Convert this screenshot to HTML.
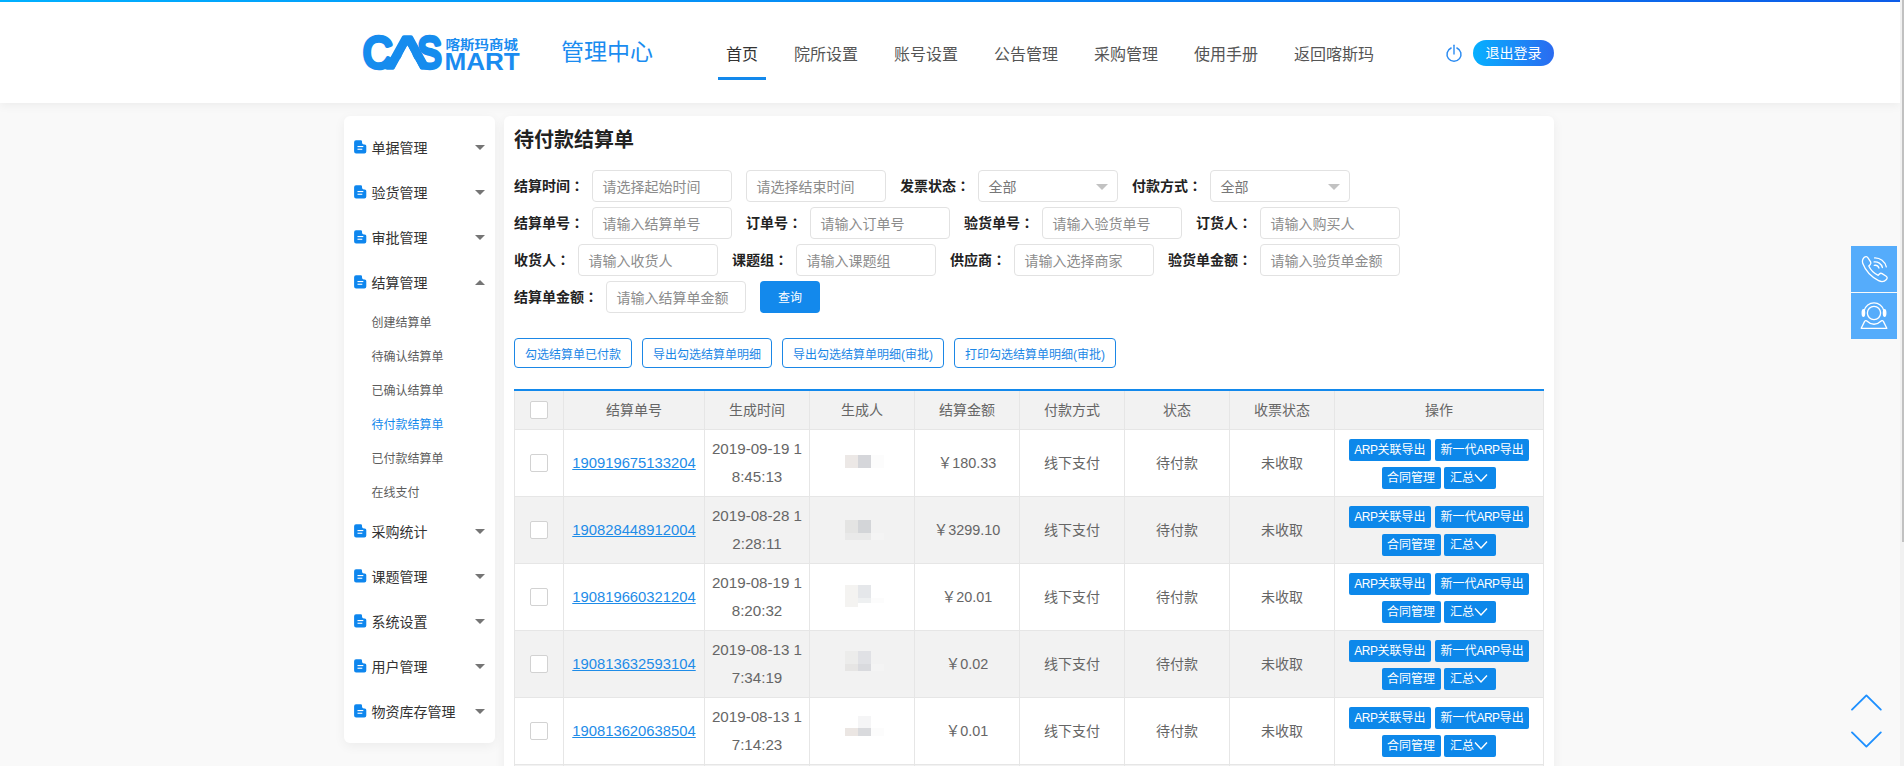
<!DOCTYPE html>
<html lang="zh-CN">
<head>
<meta charset="utf-8">
<title>待付款结算单 - 管理中心</title>
<style>
*{box-sizing:border-box;margin:0;padding:0}
html,body{width:1904px;height:766px;overflow:hidden}
body{position:relative;background:#f9f9f9;font-family:"Liberation Sans","Noto Sans CJK SC",sans-serif;font-size:14px;color:#333}
a{text-decoration:none;color:inherit}
ul{list-style:none}
/* fake scrollbar */
.sb-track{position:absolute;left:1900px;top:0;width:4px;height:766px;background:#f1f1f1;z-index:50}
.sb-thumb{position:absolute;left:1902px;top:0;width:2px;height:541.5px;background:#c1c1c1;z-index:51}
.page{position:absolute;left:0;top:0;width:1900px;height:766px;overflow:hidden}
/* header */
.header{position:absolute;left:0;top:0;width:1900px;height:103px;background:#fff;box-shadow:0 2px 10px rgba(0,0,0,.06);z-index:5}
.topline{position:absolute;left:0;top:0;width:1900px;height:2px;background:linear-gradient(90deg,#00b0ff,#0d5ce8)}
.hwrap{position:absolute;left:344px;top:0;width:1210px;height:103px}
.logo{position:absolute;left:19px;top:35px;width:160px;height:40px;overflow:visible}
.center-title{position:absolute;left:217px;top:36px;font-size:23px;line-height:32px;color:#1a8cf0;letter-spacing:0}
.nav{position:absolute;left:374px;top:0;height:103px;display:flex}
.nav a{display:block;margin-right:20px;padding:0 8px;height:80px;line-height:109px;font-size:16px;color:#555;border-bottom:3px solid transparent;white-space:nowrap}
.nav a.on{color:#333;border-bottom-color:#1389ec}
.power{position:absolute;left:1099.5px;top:44px;width:20px;height:20px}
.logout{position:absolute;left:1129px;top:40px;width:81px;height:26px;border-radius:13px;background:linear-gradient(90deg,#06b0ff,#2b6bf0);color:#fff;font-size:14px;line-height:26px;text-align:center}
/* sidebar */
.side{position:absolute;left:344px;top:116px;width:151px;height:627px;background:#fff;border-radius:6px;box-shadow:0 3px 12px rgba(0,0,0,.055)}
.mi{position:absolute;left:0;width:151px;height:45px;line-height:45px;font-size:14px;color:#333}
.mi svg.ic{position:absolute;left:9.5px;top:14px;width:13px;height:14px}
.mi span{position:absolute;left:27.5px;top:0}
.mi i{position:absolute;left:131px;top:19px;width:0;height:0;border-left:5px solid transparent;border-right:5px solid transparent;border-top:5px solid #757575}
.mi i.up{border-top:none;border-bottom:5px solid #757575}
.si{position:absolute;left:27.5px;height:34px;line-height:34px;font-size:12px;color:#5c5c5c;white-space:nowrap}
.si.on{color:#1389ec}
/* main */
.main{position:absolute;left:504px;top:116px;width:1050px;height:700px;background:#fff;border-radius:6px;box-shadow:0 3px 12px rgba(0,0,0,.055)}
.main h2{position:absolute;left:10px;top:9px;font-size:20px;line-height:30px;font-weight:bold;color:#222}
.frow{position:absolute;left:10px;height:32px;display:flex;align-items:center;white-space:nowrap}
.frow label em{font-style:normal;font-family:"Liberation Sans","Noto Sans CJK JP",sans-serif}
.frow label{font-weight:bold;font-size:14px;color:#222;margin-right:8px;line-height:32px}
.inp{width:140px;height:32px;border:1px solid #e2e2e2;border-radius:4px;background:#fff;padding:0 10px 0 9.5px;font-size:14px;line-height:32.5px;color:#8c8c8c;overflow:hidden;margin-right:14px;position:relative}
.inp.sel:after{content:"";position:absolute;right:9px;top:13px;border-left:6px solid transparent;border-right:6px solid transparent;border-top:6px solid #c2c2c2}
.inp.sel{color:#777}
.qbtn{width:60px;height:32px;border-radius:4px;background:#1389ec;color:#fff;font-size:12px;line-height:34.5px;overflow:hidden;text-align:center}
.obtns{position:absolute;left:10px;top:222px;height:30px;display:flex}
.obtns a{display:block;height:30px;line-height:33px;overflow:hidden;border:1px solid #1b87e6;border-radius:4px;color:#1b87e6;font-size:12px;padding:0 10px;margin-right:10px;white-space:nowrap;background:#fff}
/* table */
.tbl{position:absolute;left:10px;top:273px;width:1030px;border-top:2px solid #1389ec}
table{border-collapse:collapse;width:1029px;table-layout:fixed}
th,td{border:1px solid #e6e6e6;text-align:center;color:#666;font-size:14px;font-weight:normal;line-height:28px;padding:0}
th{background:#f2f2f2;height:38px;border-top:none}
td{height:67px}
tr.alt td{background:#f2f2f2}
.cb{display:inline-block;width:18px;height:18px;border:1px solid #d2d2d2;border-radius:2px;background:#fff;vertical-align:middle;position:relative;top:-1px}
td.num{font-size:15.15px}
td.amt{font-size:14.4px}
td a.lk{color:#1e8ce8;text-decoration:underline;font-size:14.8px}
.ab{display:inline-block;height:22px;line-height:23px;padding:0 5.5px;background:#0d88ea;color:#fff;font-size:12px;border-radius:2px;vertical-align:top;margin:4px 0 2px;white-space:nowrap}
.ab svg{width:14px;height:22px;vertical-align:top;margin-right:3px}
.ab u{text-decoration:none;letter-spacing:-0.5px}
.bl{position:relative;width:104px;height:66px}
.bl b{position:absolute;display:block}
/* floating */
.fl{position:absolute;left:1851px;width:46px;height:46px;background:#55acfb}
.fl svg{position:absolute;left:0;top:0;width:46px;height:46px}
.chev{position:absolute;left:1850px;width:33px;height:20px;overflow:visible}
</style>
</head>
<body>
<div class="page">

<div class="header">
  <div class="topline"></div>
  <div class="hwrap">
    <svg class="logo" viewBox="0 0 160 40">
      <defs><clipPath id="lam"><path clip-rule="evenodd" d="M0 -5 H100 V50 H0 Z M44.4 10.5 L59.8 39 L28.7 39 Z"/></clipPath></defs>
      <g font-family="Liberation Sans, sans-serif" font-size="44.3" fill="#168cee" stroke="#168cee" stroke-width="4.5" stroke-linejoin="round">
        <text transform="translate(0,32.6) scale(0.92,1)">C</text>
        <g clip-path="url(#lam)"><text transform="translate(23.9,33.3) scale(1.38,1)" stroke-width="3.4">A</text></g>
        <text transform="translate(54.5,32.6) scale(0.815,1)">S</text>
      </g>
      <text transform="translate(82.6,13.5) scale(1.145,1)" font-family="Liberation Sans, Noto Sans CJK SC, sans-serif" font-weight="bold" font-size="12.65" fill="#1a8cf0">喀斯玛商城</text>
      <text x="81.4" y="34.7" font-family="Liberation Sans, sans-serif" font-weight="bold" font-size="23.2" fill="#1a8cf0" textLength="75.4" lengthAdjust="spacingAndGlyphs">MART</text>
    </svg>
    <div class="center-title">管理中心</div>
    <div class="nav">
      <a class="on">首页</a><a>院所设置</a><a>账号设置</a><a>公告管理</a><a>采购管理</a><a>使用手册</a><a>返回喀斯玛</a>
    </div>
    <svg class="power" viewBox="0 0 20 20"><path d="M7.1 3.95 A7 7 0 1 0 12.9 3.95" fill="none" stroke="#2a8bf2" stroke-width="1.5" stroke-linecap="round"/><path d="M10 1.2 V10" stroke="#2a8bf2" stroke-width="1.4" stroke-linecap="round"/></svg>
    <a class="logout">退出登录</a>
  </div>
</div>

<div class="side" id="side">
<div class="mi" style="top:9.5px"><svg class="ic" viewBox="0 0 13 14"><path d="M2 0.3 H6.8 Q8 0.3 8 1.5 V2.6 Q8 4.6 10 4.6 H10.8 Q12.3 4.6 12.3 6.1 V11.6 Q12.3 13.6 10.3 13.6 H2.1 Q0.1 13.6 0.1 11.6 V2.3 Q0.1 0.3 2 0.3 Z" fill="#0e86ee"/><rect x="3.5" y="6" width="5.8" height="1.1" fill="#fff"/><rect x="3.5" y="8.7" width="4.8" height="1.1" fill="#fff"/></svg><span>单据管理</span><i class=""></i></div>
<div class="mi" style="top:54.5px"><svg class="ic" viewBox="0 0 13 14"><path d="M2 0.3 H6.8 Q8 0.3 8 1.5 V2.6 Q8 4.6 10 4.6 H10.8 Q12.3 4.6 12.3 6.1 V11.6 Q12.3 13.6 10.3 13.6 H2.1 Q0.1 13.6 0.1 11.6 V2.3 Q0.1 0.3 2 0.3 Z" fill="#0e86ee"/><rect x="3.5" y="6" width="5.8" height="1.1" fill="#fff"/><rect x="3.5" y="8.7" width="4.8" height="1.1" fill="#fff"/></svg><span>验货管理</span><i class=""></i></div>
<div class="mi" style="top:99.5px"><svg class="ic" viewBox="0 0 13 14"><path d="M2 0.3 H6.8 Q8 0.3 8 1.5 V2.6 Q8 4.6 10 4.6 H10.8 Q12.3 4.6 12.3 6.1 V11.6 Q12.3 13.6 10.3 13.6 H2.1 Q0.1 13.6 0.1 11.6 V2.3 Q0.1 0.3 2 0.3 Z" fill="#0e86ee"/><rect x="3.5" y="6" width="5.8" height="1.1" fill="#fff"/><rect x="3.5" y="8.7" width="4.8" height="1.1" fill="#fff"/></svg><span>审批管理</span><i class=""></i></div>
<div class="mi" style="top:144.5px"><svg class="ic" viewBox="0 0 13 14"><path d="M2 0.3 H6.8 Q8 0.3 8 1.5 V2.6 Q8 4.6 10 4.6 H10.8 Q12.3 4.6 12.3 6.1 V11.6 Q12.3 13.6 10.3 13.6 H2.1 Q0.1 13.6 0.1 11.6 V2.3 Q0.1 0.3 2 0.3 Z" fill="#0e86ee"/><rect x="3.5" y="6" width="5.8" height="1.1" fill="#fff"/><rect x="3.5" y="8.7" width="4.8" height="1.1" fill="#fff"/></svg><span>结算管理</span><i class="up"></i></div>
<a class="si" style="top:190px">创建结算单</a>
<a class="si" style="top:224px">待确认结算单</a>
<a class="si" style="top:258px">已确认结算单</a>
<a class="si on" style="top:292px">待付款结算单</a>
<a class="si" style="top:326px">已付款结算单</a>
<a class="si" style="top:360px">在线支付</a>
<div class="mi" style="top:393.5px"><svg class="ic" viewBox="0 0 13 14"><path d="M2 0.3 H6.8 Q8 0.3 8 1.5 V2.6 Q8 4.6 10 4.6 H10.8 Q12.3 4.6 12.3 6.1 V11.6 Q12.3 13.6 10.3 13.6 H2.1 Q0.1 13.6 0.1 11.6 V2.3 Q0.1 0.3 2 0.3 Z" fill="#0e86ee"/><rect x="3.5" y="6" width="5.8" height="1.1" fill="#fff"/><rect x="3.5" y="8.7" width="4.8" height="1.1" fill="#fff"/></svg><span>采购统计</span><i class=""></i></div>
<div class="mi" style="top:438.5px"><svg class="ic" viewBox="0 0 13 14"><path d="M2 0.3 H6.8 Q8 0.3 8 1.5 V2.6 Q8 4.6 10 4.6 H10.8 Q12.3 4.6 12.3 6.1 V11.6 Q12.3 13.6 10.3 13.6 H2.1 Q0.1 13.6 0.1 11.6 V2.3 Q0.1 0.3 2 0.3 Z" fill="#0e86ee"/><rect x="3.5" y="6" width="5.8" height="1.1" fill="#fff"/><rect x="3.5" y="8.7" width="4.8" height="1.1" fill="#fff"/></svg><span>课题管理</span><i class=""></i></div>
<div class="mi" style="top:483.5px"><svg class="ic" viewBox="0 0 13 14"><path d="M2 0.3 H6.8 Q8 0.3 8 1.5 V2.6 Q8 4.6 10 4.6 H10.8 Q12.3 4.6 12.3 6.1 V11.6 Q12.3 13.6 10.3 13.6 H2.1 Q0.1 13.6 0.1 11.6 V2.3 Q0.1 0.3 2 0.3 Z" fill="#0e86ee"/><rect x="3.5" y="6" width="5.8" height="1.1" fill="#fff"/><rect x="3.5" y="8.7" width="4.8" height="1.1" fill="#fff"/></svg><span>系统设置</span><i class=""></i></div>
<div class="mi" style="top:528.5px"><svg class="ic" viewBox="0 0 13 14"><path d="M2 0.3 H6.8 Q8 0.3 8 1.5 V2.6 Q8 4.6 10 4.6 H10.8 Q12.3 4.6 12.3 6.1 V11.6 Q12.3 13.6 10.3 13.6 H2.1 Q0.1 13.6 0.1 11.6 V2.3 Q0.1 0.3 2 0.3 Z" fill="#0e86ee"/><rect x="3.5" y="6" width="5.8" height="1.1" fill="#fff"/><rect x="3.5" y="8.7" width="4.8" height="1.1" fill="#fff"/></svg><span>用户管理</span><i class=""></i></div>
<div class="mi" style="top:573.5px"><svg class="ic" viewBox="0 0 13 14"><path d="M2 0.3 H6.8 Q8 0.3 8 1.5 V2.6 Q8 4.6 10 4.6 H10.8 Q12.3 4.6 12.3 6.1 V11.6 Q12.3 13.6 10.3 13.6 H2.1 Q0.1 13.6 0.1 11.6 V2.3 Q0.1 0.3 2 0.3 Z" fill="#0e86ee"/><rect x="3.5" y="6" width="5.8" height="1.1" fill="#fff"/><rect x="3.5" y="8.7" width="4.8" height="1.1" fill="#fff"/></svg><span>物资库存管理</span><i class=""></i></div>
</div>

<div class="main" id="main">
  <h2>待付款结算单</h2>
<div class="frow" style="top:54px"><label>结算时间<em lang="ja">：</em></label><div class="inp">请选择起始时间</div><div class="inp">请选择结束时间</div><label>发票状态<em lang="ja">：</em></label><div class="inp sel">全部</div><label>付款方式<em lang="ja">：</em></label><div class="inp sel">全部</div></div>
<div class="frow" style="top:91px"><label>结算单号<em lang="ja">：</em></label><div class="inp">请输入结算单号</div><label>订单号<em lang="ja">：</em></label><div class="inp">请输入订单号</div><label>验货单号<em lang="ja">：</em></label><div class="inp">请输入验货单号</div><label>订货人<em lang="ja">：</em></label><div class="inp">请输入购买人</div></div>
<div class="frow" style="top:128px"><label>收货人<em lang="ja">：</em></label><div class="inp">请输入收货人</div><label>课题组<em lang="ja">：</em></label><div class="inp">请输入课题组</div><label>供应商<em lang="ja">：</em></label><div class="inp">请输入选择商家</div><label>验货单金额<em lang="ja">：</em></label><div class="inp">请输入验货单金额</div></div>
<div class="frow" style="top:165px"><label>结算单金额<em lang="ja">：</em></label><div class="inp">请输入结算单金额</div><a class="qbtn">查询</a></div>
<div class="obtns"><a>勾选结算单已付款</a><a>导出勾选结算单明细</a><a>导出勾选结算单明细(审批)</a><a>打印勾选结算单明细(审批)</a></div>
<div class="tbl"><table>
<colgroup><col style="width:49px"><col style="width:141px"><col style="width:105px"><col style="width:105px"><col style="width:105px"><col style="width:105px"><col style="width:105px"><col style="width:105px"><col style="width:209px"></colgroup>
<tr><th><span class="cb"></span></th><th>结算单号</th><th>生成时间</th><th>生成人</th><th>结算金额</th><th>付款方式</th><th>状态</th><th>收票状态</th><th>操作</th></tr>
<tr><td><span class="cb"></span></td><td><a class="lk">190919675133204</a></td><td class="num">2019-09-19 1<br>8:45:13</td><td><div class="bl"><b style="left:35px;top:25px;width:13px;height:13px;background:#ece8e6"></b><b style="left:48px;top:25px;width:13px;height:13px;background:#d5d6da"></b><b style="left:61px;top:25px;width:13px;height:13px;background:#fcfcfc"></b></div></td><td class="amt">￥180.33</td><td>线下支付</td><td>待付款</td><td>未收取</td><td><a class="ab"><u>ARP</u>关联导出</a> <a class="ab">新一代<u>ARP</u>导出</a><br><a class="ab">合同管理</a> <a class="ab">汇总<svg viewBox="0 0 14 22"><path d="M1 7.5 L7 14 L13 7.5" fill="none" stroke="#fff" stroke-width="1.4"/></svg></a></td></tr>
<tr class="alt"><td><span class="cb"></span></td><td><a class="lk">190828448912004</a></td><td class="num">2019-08-28 1<br>2:28:11</td><td><div class="bl"><b style="left:35px;top:23px;width:13px;height:13px;background:#e4e4e3"></b><b style="left:48px;top:23px;width:13px;height:13px;background:#d3d5d8"></b><b style="left:35px;top:36px;width:26px;height:7px;background:#e9e9e9"></b><b style="left:61px;top:36px;width:13px;height:7px;background:#f4f4f4"></b></div></td><td class="amt">￥3299.10</td><td>线下支付</td><td>待付款</td><td>未收取</td><td><a class="ab"><u>ARP</u>关联导出</a> <a class="ab">新一代<u>ARP</u>导出</a><br><a class="ab">合同管理</a> <a class="ab">汇总<svg viewBox="0 0 14 22"><path d="M1 7.5 L7 14 L13 7.5" fill="none" stroke="#fff" stroke-width="1.4"/></svg></a></td></tr>
<tr><td><span class="cb"></span></td><td><a class="lk">190819660321204</a></td><td class="num">2019-08-19 1<br>8:20:32</td><td><div class="bl"><b style="left:35px;top:21px;width:13px;height:22px;background:#f4f3f1"></b><b style="left:48px;top:21px;width:13px;height:13px;background:#e5e7ea"></b><b style="left:48px;top:34px;width:13px;height:5px;background:#eef0f1"></b><b style="left:61px;top:34px;width:13px;height:5px;background:#fcfcfc"></b></div></td><td class="amt">￥20.01</td><td>线下支付</td><td>待付款</td><td>未收取</td><td><a class="ab"><u>ARP</u>关联导出</a> <a class="ab">新一代<u>ARP</u>导出</a><br><a class="ab">合同管理</a> <a class="ab">汇总<svg viewBox="0 0 14 22"><path d="M1 7.5 L7 14 L13 7.5" fill="none" stroke="#fff" stroke-width="1.4"/></svg></a></td></tr>
<tr class="alt"><td><span class="cb"></span></td><td><a class="lk">190813632593104</a></td><td class="num">2019-08-13 1<br>7:34:19</td><td><div class="bl"><b style="left:35px;top:20px;width:13px;height:13px;background:#ececeb"></b><b style="left:48px;top:20px;width:13px;height:13px;background:#e0e1e5"></b><b style="left:35px;top:33px;width:13px;height:7px;background:#e6e5e4"></b><b style="left:48px;top:33px;width:13px;height:7px;background:#d9dade"></b><b style="left:61px;top:33px;width:13px;height:7px;background:#f4f4f4"></b></div></td><td class="amt">￥0.02</td><td>线下支付</td><td>待付款</td><td>未收取</td><td><a class="ab"><u>ARP</u>关联导出</a> <a class="ab">新一代<u>ARP</u>导出</a><br><a class="ab">合同管理</a> <a class="ab">汇总<svg viewBox="0 0 14 22"><path d="M1 7.5 L7 14 L13 7.5" fill="none" stroke="#fff" stroke-width="1.4"/></svg></a></td></tr>
<tr><td><span class="cb"></span></td><td><a class="lk">190813620638504</a></td><td class="num">2019-08-13 1<br>7:14:23</td><td><div class="bl"><b style="left:48px;top:18px;width:13px;height:12px;background:#f5f5f6"></b><b style="left:35px;top:30px;width:13px;height:8px;background:#ebe6e3"></b><b style="left:48px;top:30px;width:13px;height:8px;background:#d9dadd"></b><b style="left:61px;top:30px;width:13px;height:8px;background:#fcfcfc"></b></div></td><td class="amt">￥0.01</td><td>线下支付</td><td>待付款</td><td>未收取</td><td><a class="ab"><u>ARP</u>关联导出</a> <a class="ab">新一代<u>ARP</u>导出</a><br><a class="ab">合同管理</a> <a class="ab">汇总<svg viewBox="0 0 14 22"><path d="M1 7.5 L7 14 L13 7.5" fill="none" stroke="#fff" stroke-width="1.4"/></svg></a></td></tr>
<tr class="alt"><td></td><td></td><td></td><td></td><td></td><td></td><td></td><td></td><td></td></tr>
</table></div>
</div>

<div class="fl" style="top:246px"><svg viewBox="0 0 46 46" fill="none" stroke="#fff" stroke-width="1.3" stroke-linecap="round" stroke-linejoin="round"><path d="M13.3 11.3 Q15.4 9.6 17 11.8 L19.6 15.9 Q20.4 17.4 19.1 18.7 L17.8 20 Q20.6 26.2 27.2 29.3 L28.4 28 Q29.6 26.8 31.1 27.6 L35.2 30.2 Q37 31.5 35.4 33.5 Q32.2 37 27.6 34.7 Q16 28.7 11.8 17.6 Q10.6 13.8 13.3 11.3 Z"/><path d="M23.27 19.36 A4.2 4.2 0 0 1 27.95 22.06"/><path d="M23.06 15.86 A7.7 7.7 0 0 1 31.44 21.51"/><path d="M23.60 11.91 A11.6 11.6 0 0 1 35.30 20.89"/></svg></div>
<div class="fl" style="top:293px"><svg viewBox="0 0 46 46" fill="none" stroke="#fff" stroke-width="1.3" stroke-linecap="round" stroke-linejoin="round"><circle cx="23" cy="20" r="6.6"/><path d="M13.2 17.5 A10.1 10.1 0 0 1 32.8 17.5"/><ellipse cx="12.4" cy="20" rx="1.2" ry="3.3" fill="#fff"/><ellipse cx="33.6" cy="20" rx="1.2" ry="3.3" fill="#fff"/><path d="M10.2 35.3 L13.6 28.4 Q14.4 27 15.8 27.9 Q23 34.6 30.2 27.9 Q31.6 27 32.4 28.4 L35.8 35.3 Z"/></svg></div>
<svg class="chev" style="top:693px" viewBox="0 0 33 20"><path d="M2 16.6 L16.4 2.4 L30.8 16.6" fill="none" stroke="#1e90ff" stroke-width="1.9" stroke-linecap="round" stroke-linejoin="round"/></svg>
<svg class="chev" style="top:730px" viewBox="0 0 33 20"><path d="M2 2.4 L16.4 16.6 L30.8 2.4" fill="none" stroke="#1e90ff" stroke-width="1.9" stroke-linecap="round" stroke-linejoin="round"/></svg>
</div>
<div class="sb-track"></div><div class="sb-thumb"></div>
</body>
</html>
